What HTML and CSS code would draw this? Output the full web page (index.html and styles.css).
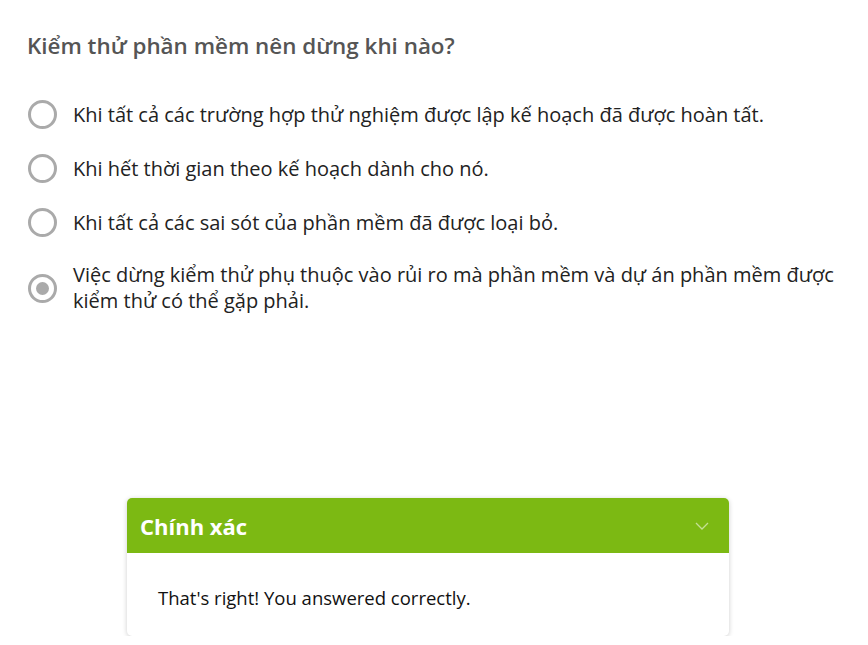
FILE: index.html
```html
<!DOCTYPE html>
<html lang="vi">
<head>
<meta charset="utf-8">
<link rel="stylesheet" href="styles.css">
</head>
<body>
<main class="quiz">
  <h1 class="question">Kiểm thử phần mềm nên dừng khi nào?</h1>
  <div class="options">
    <label class="option"><span class="radio"></span><span class="text">Khi tất cả các trường hợp thử nghiệm được lập kế hoạch đã được hoàn tất.</span></label>
    <label class="option"><span class="radio"></span><span class="text">Khi hết thời gian theo kế hoạch dành cho nó.</span></label>
    <label class="option"><span class="radio"></span><span class="text">Khi tất cả các sai sót của phần mềm đã được loại bỏ.</span></label>
    <label class="option"><span class="radio checked"></span><span class="text">Việc dừng kiểm thử phụ thuộc vào rủi ro mà phần mềm và dự án phần mềm được kiểm thử có thể gặp phải.</span></label>
  </div>
  <section class="feedback">
    <header class="feedback-head">
      <span class="feedback-title">Chính xác</span>
      <svg class="chevron" width="14" height="8" viewBox="0 0 14 8"><path d="M1 1 L7 7 L13 1" fill="none" stroke="rgba(255,255,255,0.55)" stroke-width="1.3"/></svg>
    </header>
    <div class="feedback-body">That's right! You answered correctly.</div>
  </section>
</main>
</body>
</html>
```
FILE: styles.css
```css
html, body {
  margin: 0;
  padding: 0;
  background: #fff;
}
body {
  font-family: "Open Sans", "Noto Sans", sans-serif;
  color: #222;
}
.quiz {
  padding: 31px 20px 0 27px;
}
.question {
  margin: 0;
  font-size: 22.4px;
  font-weight: 600;
  line-height: 30px;
  color: #555;
}
.options {
  margin-top: 39px;
  display: flex;
  flex-direction: column;
  gap: 25px;
}
.option {
  display: flex;
  align-items: center;
  gap: 16px;
}
.radio {
  flex: none;
  margin-left: 1px;
  width: 23px;
  height: 23px;
  border: 3px solid #aaa;
  border-radius: 50%;
  display: flex;
  align-items: center;
  justify-content: center;
}
.radio.checked::after {
  content: "";
  width: 13px;
  height: 13px;
  border-radius: 50%;
  background: #aaa;
}
.text {
  font-size: 20px;
  line-height: 26px;
  color: #222;
}
.feedback {
  margin: 184px 0 0 100px;
  width: 602px;
  border-radius: 5px;
  overflow: hidden;
  background: #fff;
  box-shadow: 0 1px 5px rgba(0,0,0,0.2);
}
.feedback-head {
  background: #7cb913;
  height: 55px;
  display: flex;
  align-items: center;
  justify-content: space-between;
  padding: 0 20px 0 13px;
}
.feedback-title {
  color: #fff;
  font-weight: 700;
  font-size: 22px;
}
.feedback-body {
  padding: 32px 31px 25px;
  font-size: 18.5px;
  line-height: 26px;
  color: #111;
}
```
